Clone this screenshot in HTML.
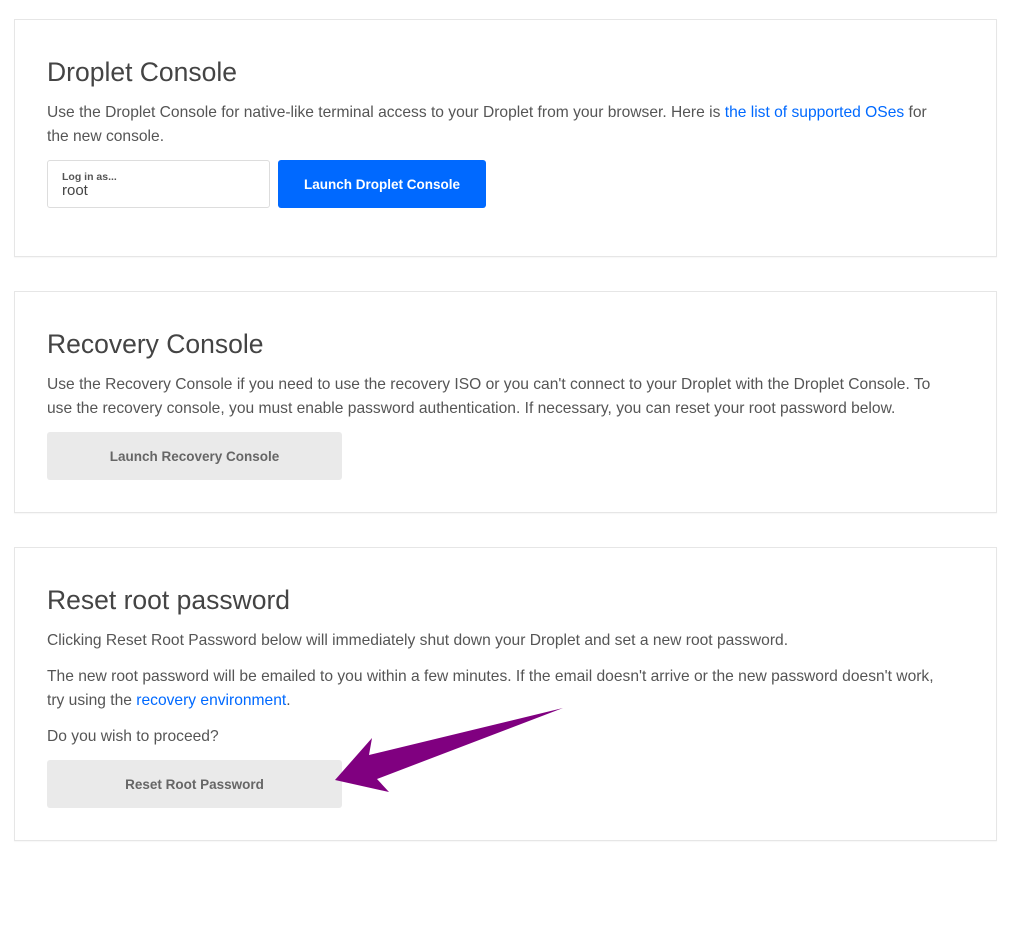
<!DOCTYPE html>
<html><head><style>
body{margin:0;background:#fff;font-family:"Liberation Sans",sans-serif;color:#555;width:1023px;height:941px;position:relative;overflow:hidden}
.card{position:absolute;left:14px;width:983px;border:1px solid #e6e6e6;box-shadow:0 1px 1px rgba(0,0,0,.04);background:#fff;box-sizing:border-box}
h2{position:absolute;left:32px;margin:0;font-weight:normal;font-size:26.5px;color:#444;white-space:nowrap}
p{position:absolute;left:32px;margin:0;font-size:15.6px;line-height:23.5px;white-space:nowrap;color:#555}
a{color:#0069ff;text-decoration:none}
.btn{position:absolute;left:32px;border-radius:3px;font-weight:bold;font-size:13.5px;display:flex;align-items:center;justify-content:center}
.grey{background:#eaeaea;color:#666;width:295px;height:48px}
</style></head><body>
<div class="card" style="top:19px;height:238px">
<h2 style="top:37px">Droplet Console</h2>
<p style="top:81px">Use the Droplet Console for native-like terminal access to your Droplet from your browser. Here is <a>the list of supported OSes</a> for<br>the new console.</p>
<div style="position:absolute;left:32px;top:140px;width:221px;height:46px;border:1px solid #ddd;border-radius:3px">
<div style="position:absolute;left:14px;top:10px;font-size:10.5px;font-weight:bold;color:#555">Log in as...</div>
<div style="position:absolute;left:14px;top:21px;font-size:15px;color:#444">root</div></div>
<div class="btn" style="left:263px;top:140px;width:208px;height:48px;background:#0069ff;color:#fff">Launch Droplet Console</div>
</div>
<div class="card" style="top:291px;height:222px">
<h2 style="top:37px">Recovery Console</h2>
<p style="top:81px">Use the Recovery Console if you need to use the recovery ISO or you can't connect to your Droplet with the Droplet Console. To<br>use the recovery console, you must enable password authentication. If necessary, you can reset your root password below.</p>
<div class="btn grey" style="top:140px">Launch Recovery Console</div>
</div>
<div class="card" style="top:547px;height:294px">
<h2 style="top:37px">Reset root password</h2>
<p style="top:81px">Clicking Reset Root Password below will immediately shut down your Droplet and set a new root password.</p>
<p style="top:117px">The new root password will be emailed to you within a few minutes. If the email doesn't arrive or the new password doesn't work,<br>try using the <a>recovery environment</a>.</p>
<p style="top:177px">Do you wish to proceed?</p>
<div class="btn grey" style="top:212px">Reset Root Password</div>
</div>
<svg style="position:absolute;left:0;top:0" width="1023" height="941"><polygon points="335,780 372,738 369,755 563,708 377,779 389,792" fill="#800080"/></svg>
</body></html>
